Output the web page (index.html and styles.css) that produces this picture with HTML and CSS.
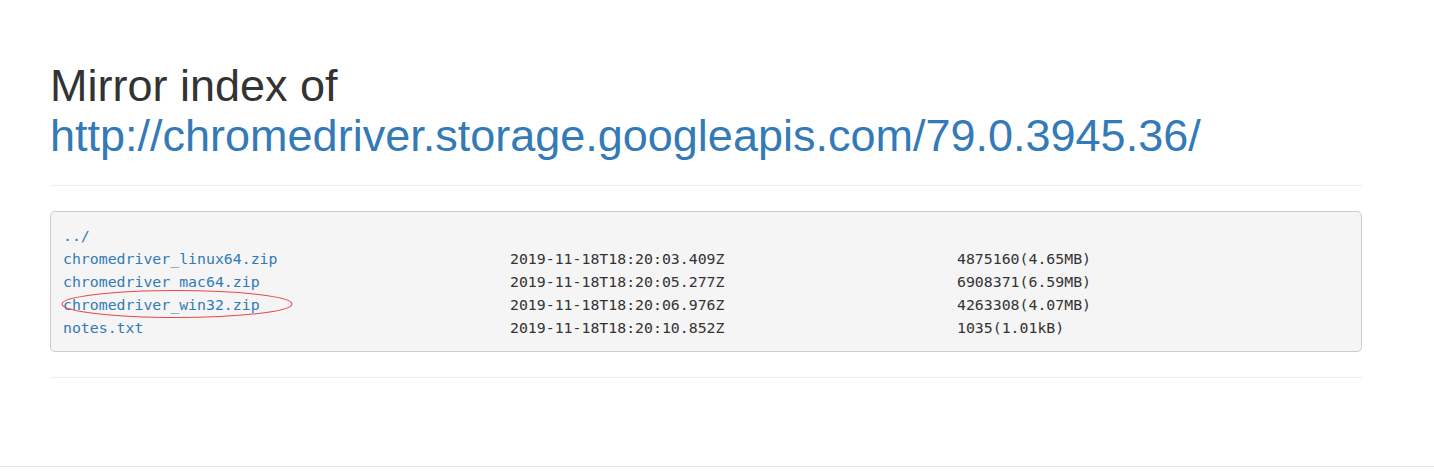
FILE: index.html
```html
<!DOCTYPE html>
<html>
<head>
<meta charset="utf-8">
<title>Mirror index</title>
<link rel="stylesheet" href="styles.css">
</head>
<body>
<div class="page">
  <div class="container">
    <h1 class="title">Mirror index of <a href="#">http://chromedriver.storage.googleapis.com/79.0.3945.36/</a></h1>
    <hr class="rule">
    <div class="listing">
      <div class="row"><a href="#">../</a></div>
      <div class="row"><a href="#">chromedriver_linux64.zip</a><span>2019-11-18T18:20:03.409Z</span><span>4875160(4.65MB)</span></div>
      <div class="row"><a href="#">chromedriver_mac64.zip</a><span>2019-11-18T18:20:05.277Z</span><span>6908371(6.59MB)</span></div>
      <div class="row marked"><a href="#">chromedriver_win32.zip</a><span>2019-11-18T18:20:06.976Z</span><span>4263308(4.07MB)</span>
        <svg class="circle" width="236" height="32" viewBox="0 0 236 32"><ellipse cx="118" cy="16" rx="115" ry="13.5" fill="none" stroke="#e8484a" stroke-width="1.1"/></svg>
      </div>
      <div class="row"><a href="#">notes.txt</a><span>2019-11-18T18:20:10.852Z</span><span>1035(1.01kB)</span></div>
    </div>
    <hr class="rule">
  </div>
  <div class="footer"></div>
</div>
</body>
</html>
```

FILE: styles.css
```css
html, body {
  margin: 0;
  padding: 0;
  background: #fff;
}
body {
  font-family: "Liberation Sans", Arial, Helvetica, sans-serif;
  color: #333;
}
a {
  color: #337ab7;
  text-decoration: none;
}
.page {
  height: 476px;
  display: flex;
  flex-direction: column;
}
.container {
  width: 1312px;
  margin-left: 50px;
  padding-top: 61px;
  height: 405px;
  box-sizing: border-box;
}
.title {
  margin: 0;
  font-size: 45px;
  font-weight: 500;
  line-height: 49.5px;
  color: #333;
}
.rule {
  margin: 25px 0;
  border: 0;
  border-top: 1px solid #eee;
  height: 0;
}
.listing {
  background: #f5f5f5;
  border: 1px solid #ccc;
  border-radius: 5px;
  padding: 13px 12px 11px;
  font-family: "DejaVu Sans Mono", "Liberation Mono", monospace;
  font-size: 14.85px;
  line-height: 23px;
  color: #333;
}
.row {
  display: grid;
  grid-template-columns: 447px 447px auto;
  height: 23px;
  white-space: pre;
}
.marked {
  position: relative;
}
.circle {
  position: absolute;
  left: -4px;
  top: -6px;
}
.footer {
  margin-top: 61px;
  border-top: 1px solid #e6e6e6;
  flex: 1;
}
```
